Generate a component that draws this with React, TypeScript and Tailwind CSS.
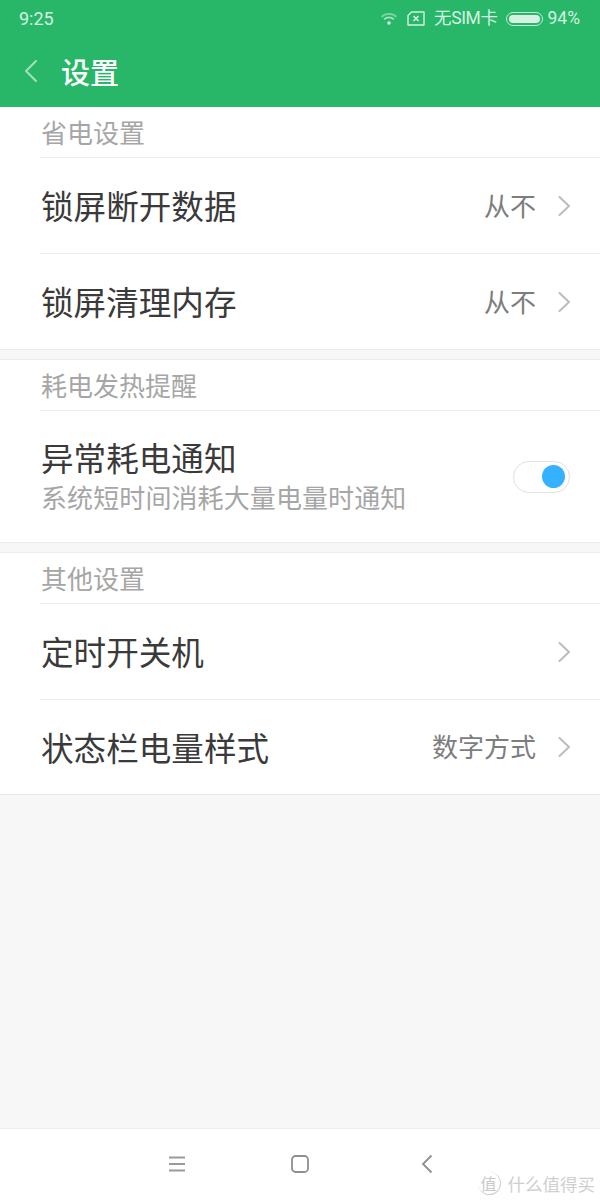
const cjk = "font-['Noto_Sans_CJK_SC','Noto_Sans',sans-serif]";

function Chevron() {
  return (
    <svg width="12" height="24" viewBox="0 0 12 24" fill="none" className="ml-[22px] shrink-0">
      <path d="M1.5 3 L11 12 L1.5 21" stroke="#bcbcbc" strokeWidth="2" strokeLinecap="round" strokeLinejoin="round" />
    </svg>
  );
}

function SectionHeader({ text }: { text: string }) {
  return (
    <div className="ml-[40px] h-[51px] border-b border-[#ececec] flex items-center text-[26px] leading-none text-[#a6a6a6] pl-[1px] pb-[1px]">
      {text}
    </div>
  );
}

function Row({ title, value, height }: { title: string; value?: string; height?: string }) {
  return (
    <div className={`ml-[40px] flex items-center pr-[30px] ${height ?? "h-[96px] border-b border-[#ececec]"}`}>
      <div className="flex-1 text-[32.6px] leading-none text-[#3a3a3a] pl-[1px]">{title}</div>
      {value && <div className="text-[26px] leading-none text-[#7d7d7d] pb-[2px]">{value}</div>}
      <Chevron />
    </div>
  );
}

function Gap() {
  return <div className="h-[11px] border-y border-[#ececec] bg-[#f7f7f7]" />;
}

export default function App() {
  return (
    <div className={`w-[600px] h-[1200px] flex flex-col bg-[#f7f7f7] overflow-hidden ${cjk}`}>
      <div className="h-[107px] bg-[#28b768] shrink-0 flex flex-col">
        <div className="h-[37px] flex items-center justify-between pl-[19px] pr-[20px] text-[#d4f1e1] text-[18px] leading-none font-['Roboto','Noto_Sans_CJK_SC',sans-serif]">
          <span>9:25</span>
          <div className="flex items-center">
            <svg width="18" height="14" viewBox="0 0 20 16" fill="none">
              <path d="M1.5 5.5 C6 1 14 1 18.5 5.5" stroke="#7fd3a4" strokeWidth="2" />
              <path d="M4.5 8.5 C7.5 5.5 12.5 5.5 15.5 8.5" stroke="#a8e0c1" strokeWidth="2" />
              <circle cx="10" cy="12.5" r="2" fill="#e6f7ee" />
            </svg>
            <svg width="18" height="15" viewBox="0 0 18 15" fill="none" className="ml-[9px]">
              <path d="M4.5 1 H17 V14 H1 V4.5 Z" stroke="#d4f1e1" strokeWidth="1.4" strokeLinejoin="round" />
              <path d="M6.5 5 L11.5 10 M11.5 5 L6.5 10" stroke="#d4f1e1" strokeWidth="1.5" />
            </svg>
            <span className="ml-[9px] text-[17.5px] tracking-[-0.4px]">无SIM卡</span>
            <div className="ml-[8px] w-[37px] h-[14px] rounded-full border border-[#c4ebd5] p-[2px]">
              <div className="w-[31px] h-full rounded-full bg-[#d4f1e1]" />
            </div>
            <span className="ml-[5px] text-[17.5px]">94%</span>
          </div>
        </div>
        <div className="flex-1 flex items-center pb-[2px]">
          <svg width="14" height="24" viewBox="0 0 14 24" fill="none" className="ml-[24px]">
            <path d="M12 2 L2 12 L12 22" stroke="#a3e0bd" strokeWidth="2" strokeLinecap="round" strokeLinejoin="round" />
          </svg>
          <span className="ml-[23px] text-[29px] leading-none font-medium text-white">设置</span>
        </div>
      </div>

      <div className="bg-white">
        <SectionHeader text="省电设置" />
        <Row title="锁屏断开数据" value="从不" />
        <Row title="锁屏清理内存" value="从不" height="h-[95px]" />
      </div>
      <Gap />
      <div className="bg-white">
        <SectionHeader text="耗电发热提醒" />
        <div className="ml-[40px] h-[131px] flex items-center pr-[30px]">
          <div className="flex-1 flex flex-col pl-[1px] pb-[2px]">
            <div className="text-[32.6px] leading-none text-[#3a3a3a]">异常耗电通知</div>
            <div className="mt-[11px] text-[26px] leading-none tracking-[0.1px] text-[#a6a6a6]">系统短时间消耗大量电量时通知</div>
          </div>
          <div className="w-[57px] h-[32px] rounded-full border border-[#e2e2e2] bg-white flex items-center justify-end pr-[4px]">
            <div className="w-[23px] h-[23px] rounded-full bg-[#35b1ff]" />
          </div>
        </div>
      </div>
      <Gap />
      <div className="bg-white">
        <SectionHeader text="其他设置" />
        <Row title="定时开关机" />
        <Row title="状态栏电量样式" value="数字方式" height="h-[94px]" />
      </div>
      <div className="border-t border-[#e6e6e6] flex-1" />

      <div className="relative h-[72px] shrink-0 bg-white border-t border-[#ececec]">
        <div className="flex items-center justify-center h-[70px] pb-[1px]">
          <svg width="18" height="16" viewBox="0 0 18 16" fill="none" className="mr-[105px]">
            <path d="M1 1.5 H17 M1 8 H17 M1 14.5 H17" stroke="#9a9a9a" strokeWidth="1.8" />
          </svg>
          <svg width="18" height="18" viewBox="0 0 18 18" fill="none" className="mr-[112px]">
            <rect x="1" y="1" width="16" height="16" rx="3.5" stroke="#8f8f8f" strokeWidth="1.8" />
          </svg>
          <svg width="12" height="20" viewBox="0 0 12 20" fill="none">
            <path d="M10.5 1.5 L2 10 L10.5 18.5" stroke="#8f8f8f" strokeWidth="1.8" />
          </svg>
        </div>
        <div className="absolute right-[5px] bottom-[5px] flex items-center text-[#cfcfcf]">
          <div className="w-[23px] h-[23px] rounded-full border-r border-b border-[#cfcfcf] flex items-center justify-center text-[16px] leading-none text-[#c8c8c8]">值</div>
          <span className="ml-[7px] text-[17.5px] leading-none">什么值得买</span>
        </div>
      </div>
    </div>
  );
}
